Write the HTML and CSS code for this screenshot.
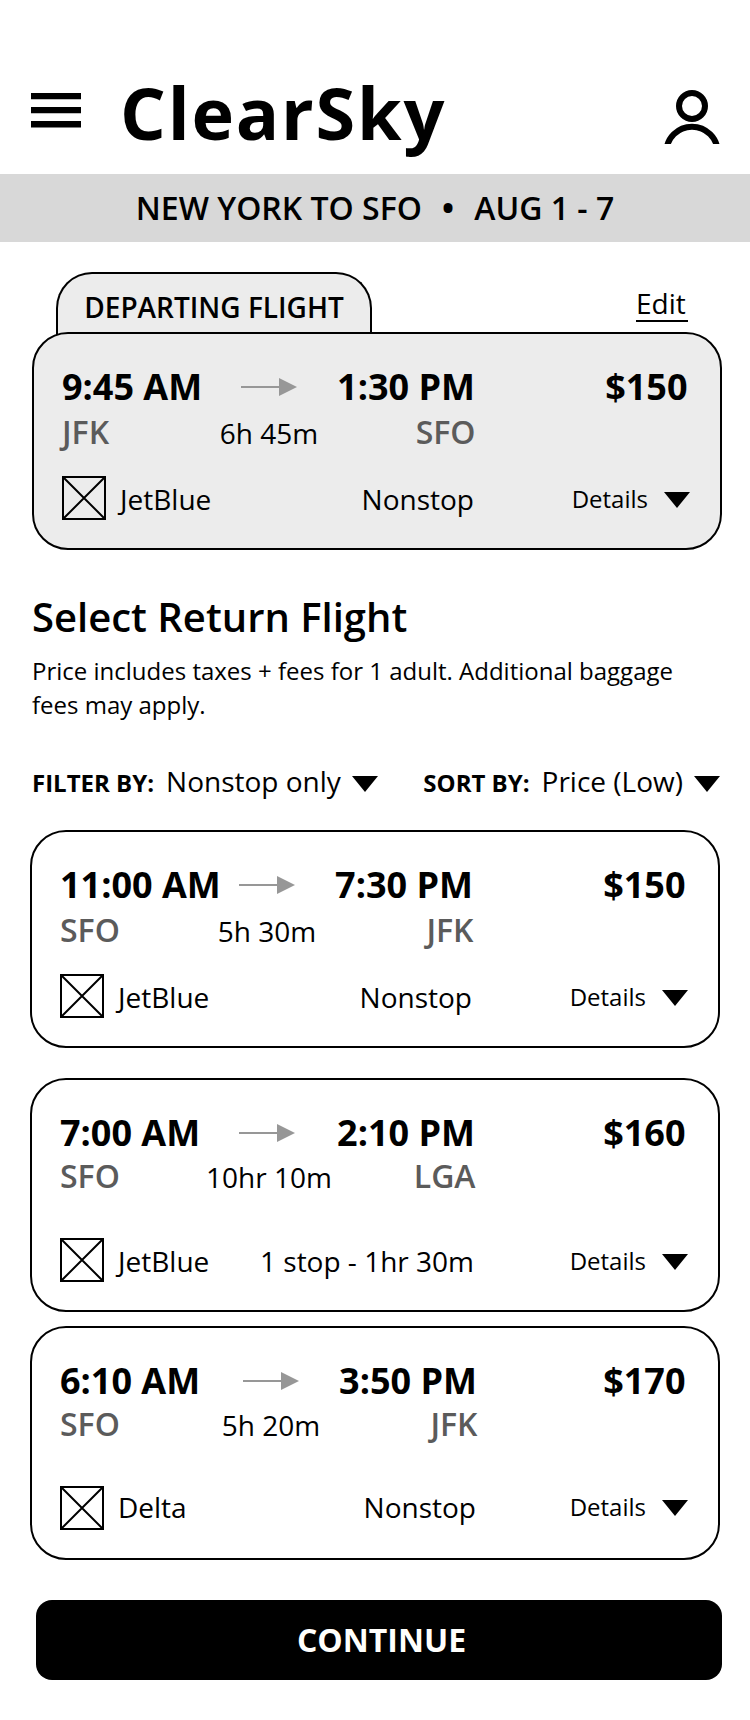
FILE: index.html
```html
<!DOCTYPE html>
<html lang="en">
<head>
<meta charset="utf-8">
<title>ClearSky</title>
<link rel="stylesheet" href="styles.css">
</head>
<body>
<svg class="defs" width="0" height="0" aria-hidden="true">
  <symbol id="arrow" viewBox="0 0 56 18"><path d="M0 8h38v2H0z"/><path d="M38 0l18 9-18 9z"/></symbol>
  <symbol id="caret" viewBox="0 0 26 16"><path d="M0 0h26L13 16z"/></symbol>
  <symbol id="logo" viewBox="0 0 44 44"><path d="M1 1h42v42H1zM1 1l42 42M43 1L1 43" fill="none" stroke="#000" stroke-width="2"/></symbol>
</svg>
<header class="header">
  <svg class="menu" width="50" height="35" viewBox="0 0 50 35"><path d="M0 0h50v6.2H0zM0 14h50v6.2H0zM0 28h50v6.4H0z"/></svg>
  <h1 class="brand">ClearSky</h1>
  <svg class="user" width="56" height="54" viewBox="0 0 56 54" fill="none" stroke="#000" stroke-width="6"><circle cx="28" cy="16" r="13"/><circle cx="28" cy="62.3" r="25.6"/></svg>
</header>
<div class="banner"><span>NEW YORK TO SFO</span><span class="dot">•</span><span>AUG 1 - 7</span></div>
<main>
  <div class="tab-row">
    <h2 class="tab">DEPARTING FLIGHT</h2>
    <a class="edit">Edit</a>
  </div>
  <article class="card card-selected">
    <div class="times"><b>9:45 AM</b><svg class="arrow"><use href="#arrow"/></svg><b class="end">1:30 PM</b><b class="price">$150</b></div>
    <div class="route"><span class="airport">JFK</span><span class="duration">6h 45m</span><span class="airport end">SFO</span></div>
    <div class="info"><svg class="logo"><use href="#logo"/></svg><span class="airline">JetBlue</span><span class="stops">Nonstop</span><span class="details">Details</span><svg class="caret"><use href="#caret"/></svg></div>
  </article>

  <section class="intro">
    <h2 class="heading">Select Return Flight</h2>
    <p class="note">Price includes taxes + fees for 1 adult. Additional baggage fees may apply.</p>
  </section>

  <div class="filters">
    <div class="filter"><b class="label">FILTER BY:</b><span class="value">Nonstop only</span><svg class="caret"><use href="#caret"/></svg></div>
    <div class="filter"><b class="label">SORT BY:</b><span class="value">Price (Low)</span><svg class="caret"><use href="#caret"/></svg></div>
  </div>

  <article class="card">
    <div class="times"><b>11:00 AM</b><svg class="arrow"><use href="#arrow"/></svg><b class="end">7:30 PM</b><b class="price">$150</b></div>
    <div class="route"><span class="airport">SFO</span><span class="duration">5h 30m</span><span class="airport end">JFK</span></div>
    <div class="info"><svg class="logo"><use href="#logo"/></svg><span class="airline">JetBlue</span><span class="stops">Nonstop</span><span class="details">Details</span><svg class="caret"><use href="#caret"/></svg></div>
  </article>
  <article class="card card-tall card-onestop">
    <div class="times"><b>7:00 AM</b><svg class="arrow"><use href="#arrow"/></svg><b class="end">2:10 PM</b><b class="price">$160</b></div>
    <div class="route"><span class="airport">SFO</span><span class="duration">10hr 10m</span><span class="airport end">LGA</span></div>
    <div class="info"><svg class="logo"><use href="#logo"/></svg><span class="airline">JetBlue</span><span class="stops">1 stop - 1hr 30m</span><span class="details">Details</span><svg class="caret"><use href="#caret"/></svg></div>
  </article>
  <article class="card card-tall card-last">
    <div class="times"><b>6:10 AM</b><svg class="arrow"><use href="#arrow"/></svg><b class="end">3:50 PM</b><b class="price">$170</b></div>
    <div class="route"><span class="airport">SFO</span><span class="duration">5h 20m</span><span class="airport end">JFK</span></div>
    <div class="info"><svg class="logo"><use href="#logo"/></svg><span class="airline">Delta</span><span class="stops">Nonstop</span><span class="details">Details</span><svg class="caret"><use href="#caret"/></svg></div>
  </article>
  <button class="continue">CONTINUE</button>
</main>
</body>
</html>
```
FILE: styles.css
```css
* { box-sizing: border-box; margin: 0; padding: 0; }
body { width: 750px; height: 1720px; background: #fff; color: #000; font-family: "Open Sans", "Noto Sans", sans-serif; font-size: 28px; line-height: 38px; white-space: nowrap; }
svg { display: block; flex: none; }
.defs { height: 0; }

.header { display: flex; align-items: flex-start; height: 174px; padding: 63px 30px 0 31px; }
.menu { margin-top: 30px; }
.brand { flex: 1; margin-left: 39px; font-size: 72px; font-weight: 700; line-height: 98px; letter-spacing: 1.8px; }
.user { margin-top: 27px; }

.banner { display: flex; justify-content: center; height: 68px; padding-top: 12px; background: #d8d8d8; font-size: 32px; font-weight: 600; line-height: 43px; }
.dot { width: 12.4px; margin: 0 20px; display: flex; justify-content: center; font-weight: 700; }

.tab-row { display: flex; justify-content: space-between; align-items: flex-start; height: 60px; margin: 30px 62px 0 56px; }
.tab { width: 316px; height: 64px; padding-top: 14px; border: 2px solid #000; border-bottom: 0; border-radius: 36px 36px 0 0; background: #ececec; font-size: 28px; font-weight: 600; text-align: center; }
.edit { width: 52px; height: 38px; margin-top: 12px; border-bottom: 2px solid #000; }

.card { --shift: 0px; --mid: 0px; --drop: 0px; position: relative; width: 690px; height: 218px; margin-left: 30px; padding: 29px 28px 0; border: 2px solid #000; border-radius: 36px; background: #fff; }
.card-selected { margin-left: 32px; background: #ececec; }
.times { display: grid; grid-template-columns: calc(179px + var(--mid)) 56px calc(178px + var(--shift) - var(--mid)) 1fr; height: 47px; font-size: 36px; line-height: 47px; }
.arrow { width: 56px; height: 18px; margin-top: 15px; fill: #979797; }
.end { text-align: right; }
.price { padding-right: 4.5px; text-align: right; }
.route { display: grid; grid-template-columns: calc(137px + var(--shift)) 140px 136.5px; align-items: baseline; height: 43px; }
.airport { color: #5b5b5b; font-size: 32px; font-weight: 600; line-height: 43px; }
.duration { text-align: center; }
.info { display: grid; grid-template-columns: 44px 120px calc(248px + var(--shift)) 1fr 26px; align-items: start; height: 44px; margin-top: 23px; padding-right: 2px; }
.logo { width: 44px; height: 44px; }
.airline { margin: calc(4px - var(--drop)) 0 0 14px; }
.stops { margin-top: calc(4px - var(--drop)); text-align: right; }
.details { margin: calc(6px - var(--drop)) 16px 0 0; font-size: 24px; line-height: 33px; text-align: right; }
.caret { width: 26px; height: 16px; }
.info .caret { margin-top: calc(16px - var(--drop)); }
.card-tall { height: 234px; }
.card-tall .times { height: 45px; }
.card-tall .info { margin-top: 41px; }
.card-onestop { --shift: 2px; margin-top: 30px; }
.card-last { --shift: 4px; --mid: 4px; --drop: 2px; margin-top: 14px; }

.intro { padding: 39px 30px 0 32px; height: 212px; }
.heading { font-size: 40px; font-weight: 600; line-height: 55px; }
.note { margin-top: 10px; font-size: 24px; line-height: 34px; white-space: normal; }
.filters { display: flex; justify-content: space-between; height: 68px; margin: 0 30px 0 32px; }
.filter { display: flex; align-items: baseline; height: 38px; }
.label { font-size: 24px; line-height: 33px; }
.value { margin: 0 11px 0 12px; }
.continue { display: block; width: 686px; height: 80px; margin: 40px 0 0 36px; padding: 0 0 1px 5px; border: 0; border-radius: 16px; background: #000; color: #fffffc; font: 700 32px/43px "Open Sans", "Noto Sans", sans-serif; }
```
